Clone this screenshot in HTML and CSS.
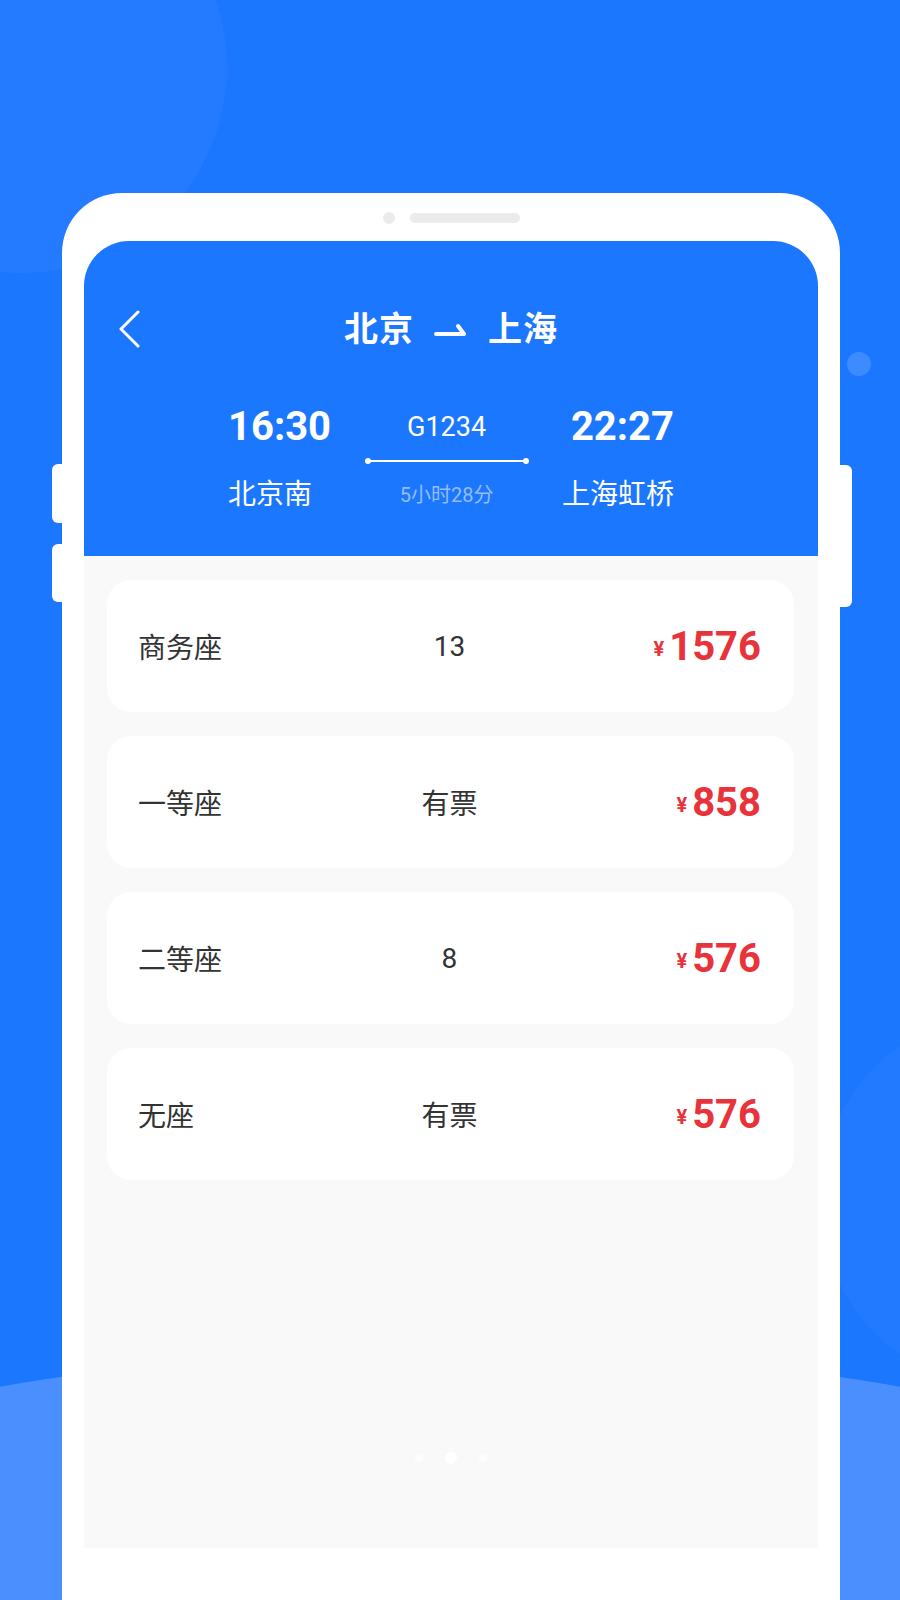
FILE: index.html
```html
<!DOCTYPE html>
<html lang="zh-CN">
<head>
    <meta charset="UTF-8">
    <meta name="viewport" content="width=device-width, initial-scale=1.0">
    <title>北京 - 上海 车次详情</title>
    <link rel="stylesheet" href="styles.css">
</head>
<body>

    <!-- Background decoration -->
    <div class="backdrop">
        <div class="bubble bubble-big"></div>
        <div class="bubble bubble-small"></div>
        <div class="bubble bubble-right"></div>
        <div class="wave"></div>
    </div>

    <!-- Phone mockup -->
    <div class="phone">
        <span class="side-key key-left-1"></span>
        <span class="side-key key-left-2"></span>
        <span class="side-key key-right"></span>

        <div class="speaker">
            <span class="cam"></span>
            <span class="grille"></span>
        </div>

        <div class="screen">
            <!-- Trip header -->
            <div class="trip-head">
                <div class="nav">
                    <svg class="back" width="24" height="38" viewBox="0 0 24 38">
                        <path d="M21 2 L4 19 L21 36" fill="none" stroke="#fff" stroke-width="3" stroke-linecap="round" stroke-linejoin="round"/>
                    </svg>
                    <h1 class="route">
                        <span>北京</span>
                        <svg class="harpoon" width="34" height="14" viewBox="0 0 34 14">
                            <path d="M2 11 H30 L24 3" fill="none" stroke="#fff" stroke-width="4" stroke-linecap="round" stroke-linejoin="round"/>
                        </svg>
                        <span>上海</span>
                    </h1>
                </div>

                <div class="schedule">
                    <div class="stop from">
                        <div class="time">16:30</div>
                        <div class="station">北京南</div>
                    </div>
                    <div class="train">
                        <div class="code">G1234</div>
                        <div class="track"></div>
                        <div class="duration">5小时28分</div>
                    </div>
                    <div class="stop to">
                        <div class="time">22:27</div>
                        <div class="station">上海虹桥</div>
                    </div>
                </div>
            </div>

            <!-- Seat list -->
            <div class="seats">
                <div class="seat-card">
                    <span class="seat-name">商务座</span>
                    <span class="seat-left">13</span>
                    <span class="seat-price"><small>¥</small>1576</span>
                </div>
                <div class="seat-card">
                    <span class="seat-name">一等座</span>
                    <span class="seat-left">有票</span>
                    <span class="seat-price"><small>¥</small>858</span>
                </div>
                <div class="seat-card">
                    <span class="seat-name">二等座</span>
                    <span class="seat-left">8</span>
                    <span class="seat-price"><small>¥</small>576</span>
                </div>
                <div class="seat-card">
                    <span class="seat-name">无座</span>
                    <span class="seat-left">有票</span>
                    <span class="seat-price"><small>¥</small>576</span>
                </div>
            </div>

            <div class="pager">
                <span></span>
                <span class="active"></span>
                <span></span>
            </div>
        </div>
    </div>

</body>
</html>
```

FILE: styles.css
```css
body {
    margin: 0;
    height: 1600px;
    overflow: hidden;
    position: relative;
    background-color: #1c77ff;
    font-family: Roboto, "Noto Sans CJK SC", sans-serif;
}

/* background decoration */
.backdrop {
    position: absolute;
    top: 0;
    left: 0;
    width: 100%;
    height: 100%;
    overflow: hidden;
}

.bubble {
    position: absolute;
    border-radius: 50%;
}

.bubble-big {
    left: -185px;
    top: -139px;
    width: 412px;
    height: 412px;
    background-color: rgba(255, 255, 255, 0.035);
}

.bubble-small {
    left: 847px;
    top: 352px;
    width: 24px;
    height: 24px;
    background-color: rgba(255, 255, 255, 0.15);
}

.bubble-right {
    left: 820px;
    top: 1010px;
    width: 380px;
    height: 380px;
    background-color: rgba(255, 255, 255, 0.025);
}

.wave {
    position: absolute;
    left: -150px;
    top: 1353px;
    width: 1200px;
    height: 300px;
    background-color: #4b8fff;
    border-radius: 600px 600px 0 0 / 100px 100px 0 0;
}

/* phone */
.phone {
    position: relative;
    margin: 193px 0 0 62px;
    width: 778px;
    height: 1407px;
    box-sizing: border-box;
    padding: 19px 22px 0;
    background-color: #fff;
    border-radius: 60px 60px 0 0;
}

.side-key {
    position: absolute;
    width: 11px;
    background-color: #fff;
}

.key-left-1 {
    left: -10px;
    top: 271px;
    height: 59px;
    border-radius: 6px 0 0 6px;
}

.key-left-2 {
    left: -10px;
    top: 351px;
    height: 58px;
    border-radius: 6px 0 0 6px;
}

.key-right {
    right: -12px;
    top: 272px;
    height: 142px;
    width: 12px;
    border-radius: 0 6px 6px 0;
}

.speaker {
    display: flex;
    justify-content: center;
    align-items: center;
    gap: 15px;
    height: 12px;
    margin-bottom: 17px;
}

.cam {
    width: 12px;
    height: 12px;
    border-radius: 50%;
    background-color: #ebebeb;
}

.grille {
    width: 110px;
    height: 10px;
    border-radius: 5px;
    background-color: #ebebeb;
}

/* screen */
.screen {
    position: relative;
    height: 1307px;
    background-color: #f9f9f9;
    border-radius: 45px 45px 0 0;
    overflow: hidden;
}

.trip-head {
    background-color: #1c77ff;
    color: #fff;
    padding: 60px 0 43px;
}

.nav {
    display: grid;
    grid-template-columns: 90px 1fr 90px;
    align-items: center;
    height: 56px;
}

.back {
    margin-left: 33px;
}

.route {
    display: flex;
    justify-content: center;
    align-items: center;
    gap: 20px;
    margin: 0;
    font-size: 34px;
    font-weight: bold;
    line-height: 56px;
    letter-spacing: 1px;
}

.harpoon {
    margin-top: 2px;
}

.schedule {
    display: flex;
    justify-content: space-between;
    width: 446px;
    margin: 46px auto 0;
}

.stop.to {
    text-align: right;
}

.time {
    font-size: 40px;
    font-weight: bold;
    line-height: 48px;
}

.station {
    margin-top: 26px;
    font-size: 28px;
    line-height: 36px;
}

.train {
    display: flex;
    flex-direction: column;
    align-items: center;
    width: 162px;
}

.code {
    font-size: 27px;
    line-height: 48px;
}

.track {
    position: relative;
    width: 162px;
    height: 2px;
    margin: 9px 0 15px;
    background-color: #fff;
}

.track::before,
.track::after {
    content: "";
    position: absolute;
    top: -2px;
    width: 6px;
    height: 6px;
    border-radius: 50%;
    background-color: #fff;
}

.track::before {
    left: -1px;
}

.track::after {
    right: -1px;
}

.duration {
    font-size: 20px;
    line-height: 36px;
    color: #94bdfb;
}

/* seats */
.seats {
    display: flex;
    flex-direction: column;
    gap: 24px;
    padding: 24px 24px 0 23px;
}

.seat-card {
    display: grid;
    grid-template-columns: 1fr 1fr 1fr;
    align-items: center;
    height: 132px;
    padding: 0 33px 0 31px;
    background-color: #fff;
    border-radius: 24px;
}

.seat-name {
    font-size: 28px;
    color: #333;
}

.seat-left {
    justify-self: center;
    font-size: 28px;
    color: #333;
}

.seat-price {
    justify-self: end;
    font-size: 40px;
    font-weight: bold;
    color: #e8333a;
}

.seat-price small {
    font-size: 20px;
    margin-right: 5px;
    vertical-align: 4px;
}

.pager {
    display: flex;
    justify-content: center;
    align-items: center;
    gap: 22px;
    margin-top: 272px;
}

.pager span {
    width: 8px;
    height: 8px;
    border-radius: 50%;
    background-color: rgba(255, 255, 255, 0.7);
}

.pager span.active {
    width: 12px;
    height: 12px;
    background-color: #fff;
}
```
